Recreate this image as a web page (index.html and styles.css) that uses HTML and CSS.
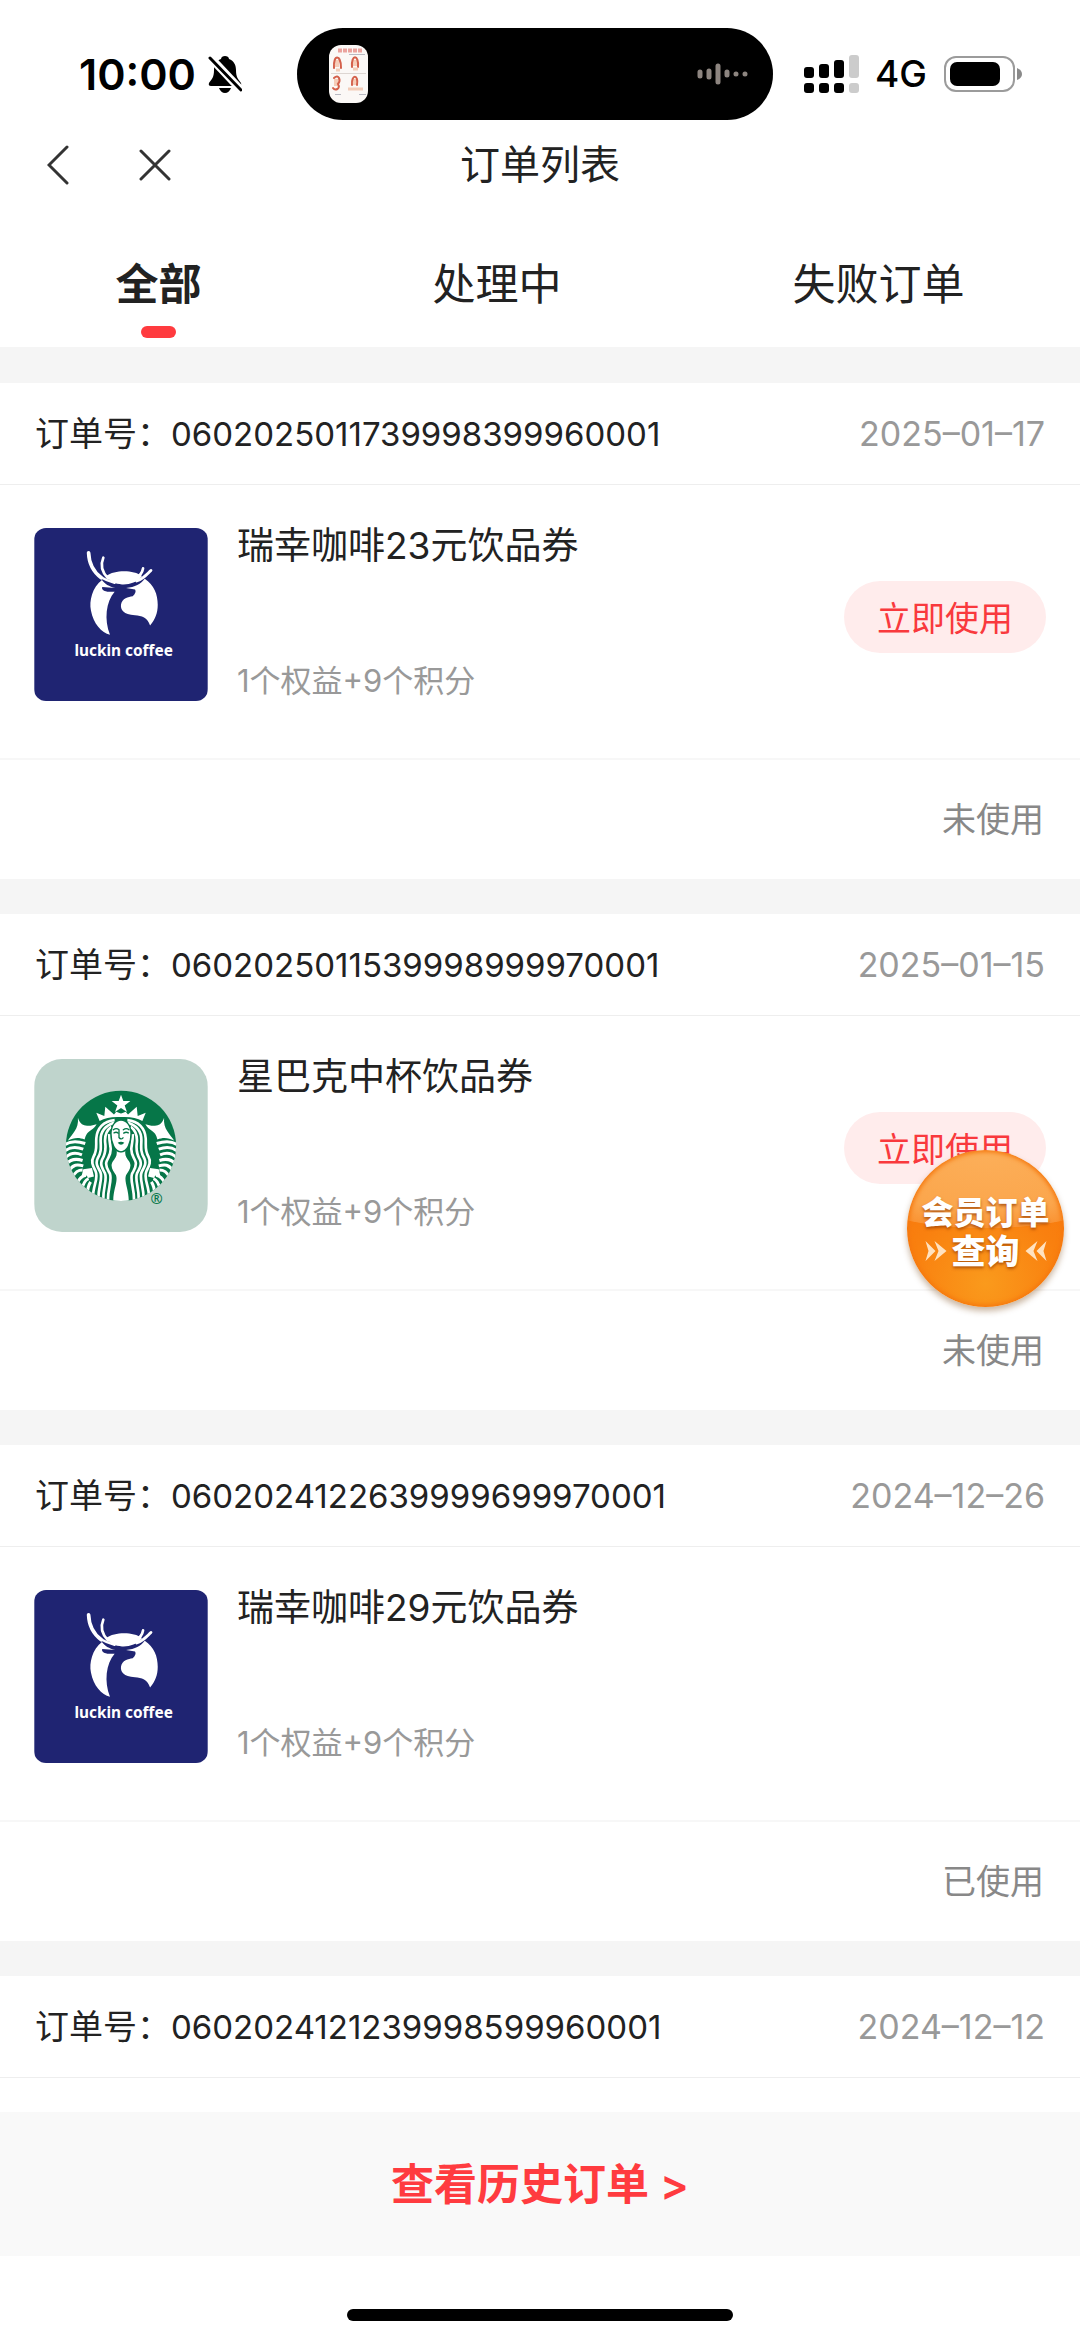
FILE: index.html
```
<!DOCTYPE html>
<html lang="zh-CN">
<head>
  <meta charset="UTF-8" />
  <meta name="viewport" content="width=device-width, initial-scale=1.0">
  <title>订单列表</title>
  <link rel="stylesheet" href="styles.css">
</head>
<body>
  <!-- shared logos -->
  <svg class="defs" width="0" height="0" aria-hidden="true">
    <symbol id="luckin" viewBox="43 55 520 518">
      <rect x="43" y="55" width="520" height="518" fill="#1f2472"/>
      <g fill="#fff">
        <path d="M258 199C285 180 340 180 366 199C350 219 328 225 306 224C286 223 268 215 258 199Z"/>
        <path d="M246 211C217 232 207 275 213 302C220 342 245 368 270 375C252 330 258 275 284 246L262 246C250 244 244 238 247 232L286 235C268 231 253 222 246 211Z"/>
        <path d="M374 207C402 225 413 254 413 285C413 310 405 330 390 347C382 322 365 318 345 316C310 314 301 300 303 284C306 265 325 261 338 259C346 252 349 244 345 239L318 235C345 232 363 222 374 207Z"/>
      </g>
      <g fill="none" stroke="#fff" stroke-linecap="round">
        <path stroke-width="11" d="M206 129C207 160 220 186 244 204"/>
        <path stroke-width="7" d="M240 201C255 210 268 215 284 219"/>
        <path stroke-width="8" d="M250 144C241 165 247 188 264 206"/>
        <path stroke-width="8" d="M369 176C367 188 359 198 348 206"/>
        <path stroke-width="8" d="M393 182C383 190 376 204 350 214"/>
      </g>
    </symbol>

    <symbol id="starbucks" viewBox="43 42 520 518">
      <rect x="43" y="42" width="520" height="518" fill="#bfd4cc"/>
      <clipPath id="sbClip"><circle cx="303" cy="302" r="165"/></clipPath>
      <circle cx="303" cy="302" r="165" fill="#067648"/>
      <g clip-path="url(#sbClip)">
        <g id="sbHalf">
          <!-- tail -->
          <path fill="#fff" d="M174 218C179 233 186 240 197 241C210 243 220 240 230 237C222 252 207 257 201 266C197 272 196 277 194 283C176 275 160 278 144 286C157 266 177 252 174 218Z"/>
          <g fill="none" stroke="#fff" stroke-width="9">
            <path d="M134 299C152 286 174 288 196 295"/>
            <path d="M134 318C152 303 172 305 190 312"/>
            <path d="M136 338C152 321 170 322 186 329"/>
            <path d="M140 357C154 339 170 340 188 346"/>
            <path d="M147 377C160 357 172 357 190 362"/>
            <path d="M158 396C166 379 174 374 188 374"/>
            <path d="M172 414C178 399 185 392 198 390"/>
            <path d="M186 432C190 415 194 404 206 400"/>
            <path d="M203 446C202 428 207 418 212 410"/>
          </g>
          <path fill="#fff" d="M190 372L216 368L222 394L204 398C200 388 194 390 185 392Z"/>
          <!-- hair -->
          <g fill="none" stroke="#fff" stroke-width="8">
            <path d="M284 225C250 228 231 250 229 280C228 305 232 316 221 334C212 350 219 362 227 378C237 400 218 420 219 460"/>
            <path d="M282 233C254 242 241 262 242 288C243 310 244 322 233 340C226 354 233 366 241 380C250 401 234 420 235 468"/>
            <path d="M274 245C257 258 253 274 256 296C258 316 256 328 246 344C240 358 247 370 255 384C263 404 248 424 250 470"/>
            <path d="M268 267C267 284 271 298 272 310C273 328 266 334 260 348C254 362 264 374 270 386C277 406 262 430 264 472"/>
          </g>
          <!-- body -->
          <path fill="#fff" d="M304 322L290 317C292 332 286 338 279 348C268 364 281 378 288 390C295 408 278 436 280 470L304 470Z"/>
          <!-- crown -->
          <path fill="#fff" d="M239 228L229 203L253 213L256 185L282 208L289 200L304 206L304 216C278 214 256 218 239 228Z"/>
        </g>
        <use href="#sbHalf" transform="translate(606 0) scale(-1 1)"/>
        <path fill="#fff" d="M303 149L310 168L331 168L314 181L321 201L303 189L285 201L292 181L275 168L296 168Z"/>
        <path fill="#fff" stroke="#067648" stroke-width="4" d="M303 225C286 225 273 242 273 266C273 294 285 320 303 320C321 320 333 294 333 266C333 242 320 225 303 225Z"/>
        <g fill="none" stroke="#067648" stroke-width="4" stroke-linecap="round">
          <path d="M280 254Q289 247 297 254L297 277Q303 285 309 278"/>
          <path d="M310 254Q319 247 327 254"/>
          <path d="M282 263Q289 259 295 264M311 264Q318 259 325 263"/>
        </g>
        <path fill="#067648" d="M293 293Q303 287 313 293Q303 304 293 293Z"/>
      </g>
    </symbol>
  </svg>

  <div class="app">
    <div class="status-bar">
      <div class="status-left">
        <span class="clock">10:00</span>
        <svg class="bell" viewBox="0 0 34 38" aria-hidden="true">
          <path d="M17 1C19 1 21 2 21 4C26 6 28 10 28 15C28 22 30 24 33 28Q34 31 31 31H3Q0 31 1 28C4 24 6 22 6 15C6 10 8 6 13 4C13 2 15 1 17 1Z"/>
          <path d="M11 33H23Q21 38 17 38Q13 38 11 33Z"/>
          <path d="M0 0L34 36" stroke="#fff" stroke-width="8"/>
          <path d="M2 3L33 35" stroke="#000" stroke-width="3" stroke-linecap="round"/>
        </svg>
      </div>
      <div class="island">
        <svg class="thumb" viewBox="0 0 39 58" aria-hidden="true">
          <rect width="39" height="58" rx="12" fill="#fbf8f6"/>
          <path d="M9 5.500H33" stroke="#eba39e" stroke-width="4" stroke-dasharray="4 1"/>
          <path d="M20 9.500H36M30 49.500H37M6 49.500H12" stroke="#b9b9c2" stroke-width="1"/>
          <path d="M2 28.500H37" stroke="#ddd6d2" stroke-width="1"/>
          <path d="M8 15V22M26 15V21M7 34V41M26 34V40" stroke="#f6cdb9" stroke-width="4"/>
          <g fill="none" stroke="#d4604b" stroke-width="2" stroke-linecap="round">
            <path d="M5 23C4 9 12 9 12 23"/>
            <path d="M23 22C22 9 30 9 29 22"/>
            <path d="M5 33C10 28 12 36 9 39C12 44 6 46 4 43"/>
            <path d="M23 40C22 29 30 29 28 40"/>
          </g>
          <path d="M7 25H11M24 24H29M19 44H34" stroke="#f3ccb8" stroke-width="3"/>
        </svg>
        <svg class="wave" viewBox="0 0 52 24" aria-hidden="true">
          <g stroke="#8d8580" stroke-linecap="round">
            <path stroke-width="5" d="M3 10V14M12 9V15M21 4V20M30 10V13"/>
            <path stroke-width="5" d="M39 12V12M48 12V12"/>
          </g>
        </svg>
      </div>
      <div class="status-right">
        <svg class="signal" viewBox="0 0 55 38" aria-hidden="true">
          <rect x="0" y="12" width="10" height="11" rx="3"/>
          <rect x="15" y="9" width="10" height="14" rx="3"/>
          <rect x="30" y="5" width="10" height="18" rx="3"/>
          <rect x="45" y="0" width="10" height="23" rx="3" fill="#ccc"/>
          <rect x="0" y="28" width="10" height="10" rx="3"/>
          <rect x="15" y="28" width="10" height="10" rx="3"/>
          <rect x="30" y="28" width="10" height="10" rx="3"/>
          <rect x="45" y="28" width="10" height="10" rx="3" fill="#ccc"/>
        </svg>
        <span class="network">4G</span>
        <svg class="battery" viewBox="0 0 78 36" aria-hidden="true">
          <rect x="1" y="1" width="69" height="34" rx="11" fill="none" stroke="#9b9b9b" stroke-width="2"/>
          <rect x="6" y="6" width="50" height="24" rx="7"/>
          <path d="M73 12Q78 14 78 18Q78 22 73 24Z" fill="#8a8a8a"/>
        </svg>
      </div>
    </div>

    <header class="nav">
      <div class="nav-actions">
        <button type="button" class="nav-btn" aria-label="返回">
          <svg width="22" height="40" viewBox="0 0 22 40"><path d="M20 2L2 20L20 38"/></svg>
        </button>
        <button type="button" class="nav-btn" aria-label="关闭">
          <svg width="32" height="32" viewBox="0 0 32 32"><path d="M2 2L30 30M30 2L2 30"/></svg>
        </button>
      </div>
      <h1 class="nav-title">订单列表</h1>
    </header>

    <nav class="tabs">
      <button type="button" class="tab active">全部</button>
      <button type="button" class="tab">处理中</button>
      <button type="button" class="tab">失败订单</button>
    </nav>

    <main class="orders">
      <article class="order">
        <div class="order-head">
          <span>订单号：<span class="order-no">0602025011739998399960001</span></span>
          <time class="order-date">2025–01–17</time>
        </div>
        <div class="order-body">
          <svg class="logo" viewBox="0 0 520 518" role="img" aria-label="luckin coffee">
            <use href="#luckin"/>
            <text x="268" y="382" text-anchor="middle" class="luckin-text">luckin coffee</text>
          </svg>
          <div class="order-info">
            <h2 class="order-title">瑞幸咖啡23元饮品券</h2>
            <p class="order-cost">1个权益+9个积分</p>
          </div>
          <button type="button" class="use-btn">立即使用</button>
        </div>
        <div class="order-foot">未使用</div>
      </article>

      <article class="order">
        <div class="order-head">
          <span>订单号：<span class="order-no">0602025011539998999970001</span></span>
          <time class="order-date">2025–01–15</time>
        </div>
        <div class="order-body">
          <svg class="logo logo-round" viewBox="0 0 520 518" role="img" aria-label="Starbucks">
            <use href="#starbucks"/>
            <text x="367" y="434" text-anchor="middle" class="starbucks-reg">®</text>
          </svg>
          <div class="order-info">
            <h2 class="order-title">星巴克中杯饮品券</h2>
            <p class="order-cost">1个权益+9个积分</p>
          </div>
          <button type="button" class="use-btn">立即使用</button>
        </div>
        <div class="order-foot">未使用</div>
      </article>

      <article class="order">
        <div class="order-head">
          <span>订单号：<span class="order-no">0602024122639999699970001</span></span>
          <time class="order-date">2024–12–26</time>
        </div>
        <div class="order-body">
          <svg class="logo" viewBox="0 0 520 518" role="img" aria-label="luckin coffee">
            <use href="#luckin"/>
            <text x="268" y="382" text-anchor="middle" class="luckin-text">luckin coffee</text>
          </svg>
          <div class="order-info">
            <h2 class="order-title">瑞幸咖啡29元饮品券</h2>
            <p class="order-cost">1个权益+9个积分</p>
          </div>
        </div>
        <div class="order-foot">已使用</div>
      </article>

      <article class="order order-last">
        <div class="order-head">
          <span>订单号：<span class="order-no">0602024121239998599960001</span></span>
          <time class="order-date">2024–12–12</time>
        </div>
      </article>
    </main>

    <a class="history" href="#">查看历史订单 &gt;</a>

    <div class="home-area"><div class="home-bar"></div></div>

    <!-- floating entry over the list -->
    <button type="button" class="float-btn">
      <span>会员订单</span>
      <span class="float-line-2">
        <svg class="arrows" viewBox="0 0 22 22" aria-hidden="true"><path d="M1 1L11 11L1 21L4 11ZM10 1L22 11L10 21L14 11Z"/></svg>
        查询
        <svg class="arrows" viewBox="0 0 22 22" aria-hidden="true"><path d="M21 1L11 11L21 21L18 11ZM12 1L0 11L12 21L8 11Z"/></svg>
      </span>
    </button>
  </div>
</body>
</html>
```
FILE: styles.css
```
* {
  box-sizing: border-box;
}
body {
  margin: 0;
  background: #fff;
  color: #222;
  font-family: Inter, "Noto Sans CJK SC", sans-serif;
  font-size: 34px;
  line-height: 40px;
}
h1, h2, p {
  margin: 0;
  font-weight: 400;
}
button {
  border: none;
  padding: 0;
  background: none;
  color: inherit;
  font-family: inherit;
  cursor: pointer;
}
svg {
  display: block;
  flex-shrink: 0;
}
.defs {
  position: absolute;
}
.app {
  position: relative;
  display: flex;
  flex-direction: column;
  min-height: 100vh;
}

/* status bar */
.status-bar {
  display: grid;
  grid-template-columns: 297fr 476fr 307fr;
  height: 120px;
  padding-top: 28px;
  color: #000;
}
.status-left, .status-right {
  display: flex;
  align-items: center;
}
.status-left {
  justify-content: flex-end;
  gap: 12px;
  padding-right: 55px;
}
.clock {
  font-size: 43px;
  font-weight: 600;
}
.bell {
  width: 34px;
  height: 38px;
}
.island {
  display: flex;
  align-items: center;
  justify-content: space-between;
  padding: 0 24px 0 32px;
  border-radius: 46px;
  background: #000;
}
.thumb {
  width: 39px;
  height: 58px;
}
.wave {
  width: 52px;
  height: 24px;
}
.status-right {
  padding-left: 31px;
}
.signal {
  width: 55px;
  height: 38px;
}
.network {
  margin: 0 17px 0 16px;
  font-size: 37px;
  font-weight: 500;
}
.battery {
  width: 78px;
  height: 36px;
}

/* title */
.nav {
  display: grid;
  grid-template-columns: 1fr auto 1fr;
  align-items: center;
  height: 90px;
}
.nav-actions {
  display: flex;
  align-items: center;
  gap: 70px;
  padding-left: 47px;
}
.nav-btn svg {
  fill: none;
  stroke: #333;
  stroke-width: 3;
  stroke-linecap: round;
}
.nav-title {
  font-size: 40px;
}

/* tabs */
.tabs {
  display: flex;
  justify-content: space-around;
  height: 137px;
}
.tab {
  display: flex;
  flex-direction: column;
  align-items: center;
  justify-content: space-between;
  padding: 43px 0 9px;
  font-size: 43px;
  line-height: 62px;
}
.tab.active {
  font-weight: 700;
}
.tab::after {
  content: "";
  width: 35px;
  height: 12px;
  border-radius: 6px;
}
.tab.active::after {
  background: #ff3b3f;
}

/* orders */
.orders {
  display: flex;
  flex: 1;
  flex-direction: column;
  gap: 35px;
  padding-top: 36px;
  background: #f5f5f5;
}
.order {
  background: #fff;
}
.order-last {
  flex: 1;
}
.order-head {
  display: flex;
  align-items: center;
  justify-content: space-between;
  height: 102px;
  padding: 0 35px;
  border-bottom: 1px solid #eee;
}
.order-no {
  font-size: 33px;
}
.order-date {
  color: #999;
}
.order-body {
  display: flex;
  padding: 43px 34px 57px;
  border-bottom: 2px solid #f7f7f7;
}
.logo {
  width: 174px;
  height: 173px;
  border-radius: 12px;
}
.logo-round {
  border-radius: 28px;
}
.luckin-text {
  fill: #fff;
  font: 700 46px "Noto Sans", sans-serif;
}
.starbucks-reg {
  fill: #067648;
  font: 500 44px "Noto Sans", sans-serif;
}
.order-info {
  display: flex;
  flex: 1;
  flex-direction: column;
  justify-content: space-between;
  margin-left: 29px;
}
.order-title {
  font-size: 37px;
  line-height: 36px;
}
.order-cost {
  color: #999;
  font-size: 31px;
}
.use-btn {
  align-self: center;
  height: 72px;
  margin-top: 4px;
  padding: 0 33px;
  border-radius: 36px;
  background: #ffecec;
  color: #f9393d;
  font-size: 34px;
}
.order-foot {
  display: flex;
  align-items: center;
  justify-content: flex-end;
  height: 119px;
  padding-right: 36px;
  color: #888;
}

/* bottom */
.history {
  display: flex;
  align-items: center;
  justify-content: center;
  height: 144px;
  background: #f9f9f9;
  color: #ff3b3f;
  font-size: 43px;
  font-weight: 600;
  text-decoration: none;
}
.home-area {
  display: flex;
  align-items: flex-end;
  justify-content: center;
  height: 85px;
  padding-bottom: 20px;
}
.home-bar {
  width: 386px;
  height: 12px;
  border-radius: 6px;
  background: #000;
}

/* floating button */
.float-btn {
  position: absolute;
  top: 1150px;
  right: 16px;
  display: flex;
  flex-direction: column;
  align-items: center;
  justify-content: center;
  width: 157px;
  height: 157px;
  padding-top: 6px;
  border-radius: 50%;
  background:
    radial-gradient(ellipse 110% 45% at 50% 5%, #fcae58 0, #fba64c 75%, #fa9434 99%, transparent 100%),
    radial-gradient(circle at 50% 85%, #fa9a1c 0, #f9800f 50%, #f8740c 100%);
  box-shadow: 0 4px 6px rgba(120, 70, 20, 0.4), inset 0 0 4px 2px #f5780f;
  color: #fff;
  font-size: 32px;
  font-weight: 800;
  line-height: 39px;
  text-shadow: 0 2px 3px rgba(150, 60, 0, 0.7);
}
.float-line-2 {
  display: flex;
  align-items: center;
  gap: 5px;
  font-size: 34px;
}
.arrows {
  width: 23px;
  height: 22px;
  fill: #ffe2c0;
}
```
